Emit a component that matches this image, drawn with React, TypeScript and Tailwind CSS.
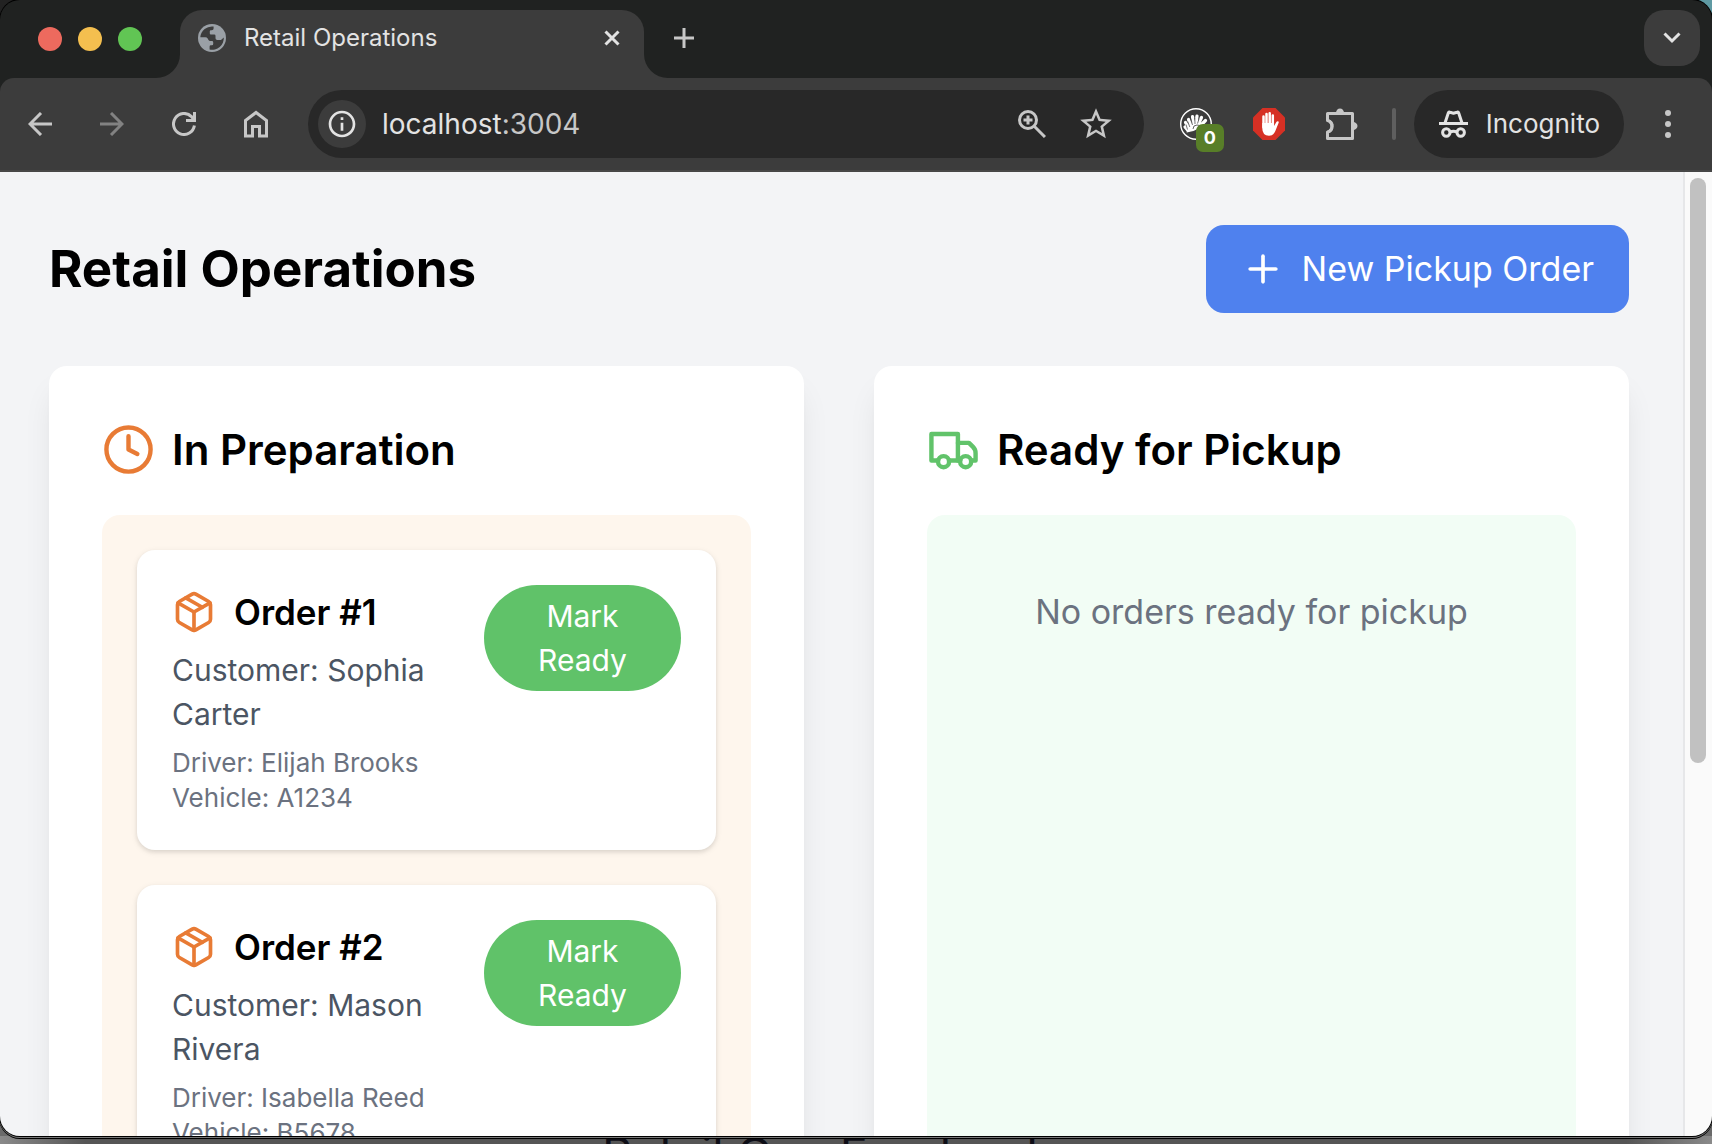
import React from "react";
import { Clock, Package, Plus } from "lucide-react";
import { MdInfoOutline, MdStarOutline } from "react-icons/md";

type Order = { id: number; customer: string; driver: string; vehicle: string };

const preparing: Order[] = [
  { id: 1, customer: "Sophia Carter", driver: "Elijah Brooks", vehicle: "A1234" },
  { id: 2, customer: "Mason Rivera", driver: "Isabella Reed", vehicle: "B5678" },
];

function IconButton({ label, children, className = "" }: { label: string; children: React.ReactNode; className?: string }) {
  return (
    <button type="button" aria-label={label} className={`flex size-10 shrink-0 items-center justify-center text-[#c7c7c7] ${className}`}>
      {children}
    </button>
  );
}

/* Browser icons, stroked with the current text colour. */

function Glyph({ width, height, children, strokeWidth = 3 }: { width: number; height: number; children: React.ReactNode; strokeWidth?: number }) {
  return (
    <svg width={width} height={height} viewBox={`0 0 ${width} ${height}`} fill="none" stroke="currentColor" strokeWidth={strokeWidth} aria-hidden="true">
      {children}
    </svg>
  );
}

function GlobeIcon() {
  return (
    <svg width="28" height="28" viewBox="0 0 28 28" aria-hidden="true">
      <circle cx="14" cy="14" r="14" fill="#9aa0a6" />
      <path
        d="M2.300 13.300A11.800 11.800 0 0 1 15.600 2.500V4.500q0 1.800-1.800 1.800h-1q-1 0-1 1v2.200q0 1 1 1h3.400q1.300 0 1.300 1.300v2.400q0 1.800 1.800 1.800h3.700l2.800-2.600A11.800 11.800 0 0 1 11.600 25.600V22.500q0-1.300 1.300-1.300h1q1.300 0 1.300-1.300v-1.600q0-1.300-1.300-1.300h-1.500q-1.500 0-2.200-1.500l-.7-1.200q-.6-1-2-1Z"
        fill="#3c3c3c"
      />
    </svg>
  );
}

const BackIcon = () => (
  <Glyph width={24} height={24}>
    <path d="M24 12H2.500M13 1 2 12l11 11" />
  </Glyph>
);

const ForwardIcon = () => (
  <Glyph width={24} height={24}>
    <path d="M0 12h21.500M11 1l11 11-11 11" />
  </Glyph>
);

const ReloadIcon = () => (
  <Glyph width={24} height={24}>
    <path d="M22.400 13.500A10.500 10.500 0 1 1 19.500 4.600L22.500 8.500M22.500 0v8.500H14" />
  </Glyph>
);

const HomeIcon = () => (
  <Glyph width={24} height={28}>
    <path d="M1.500 10.500 12 2.500l10.500 8V26H15.500V16.500h-7V26h-7Z" />
  </Glyph>
);

const ZoomIcon = () => (
  <Glyph width={28} height={28}>
    <circle cx="10" cy="10" r="8.500" />
    <path d="m16 16 11 11M10 5.500v9M5.500 10h9" />
  </Glyph>
);

const CloseIcon = () => (
  <Glyph width={16} height={16}>
    <path d="m1.500 1.500 13 13M14.500 1.500l-13 13" />
  </Glyph>
);

const NewTabIcon = () => (
  <Glyph width={20} height={20}>
    <path d="M10 0v20M0 10h20" />
  </Glyph>
);

const ChevronIcon = () => (
  <Glyph width={18} height={12}>
    <path d="m1.500 1.500 7.500 7.500 7.500-7.500" />
  </Glyph>
);

const PuzzleIcon = () => (
  <Glyph width={32} height={32}>
    <path d="M1.500 12.500V5.500H26.500V30.500H1.500V24C7.500 22.500 7.500 14 1.500 12.500Z" strokeLinejoin="round" />
    <path d="M10 5a4 4.500 0 0 1 8 0ZM27 14a4.500 4 0 0 1 0 8Z" fill="currentColor" stroke="none" />
    <path d="M0 14v8.500" stroke="#3c3c3c" strokeWidth={5} />
    <path d="M1.500 12.500C7.500 14 7.500 22.500 1.500 24" />
  </Glyph>
);

const IncognitoIcon = () => (
  <Glyph width={29} height={28}>
    <path d="M6 13 9.300 3q.4-1.200 1.600-.8l3.600 1 3.600-1q1.200-.4 1.600.8L23 13" strokeLinejoin="round" />
    <path d="M0 13.500h29" />
    <circle cx="7.300" cy="22.500" r="3.700" />
    <circle cx="21.700" cy="22.500" r="3.700" />
    <path d="M11 22q3.500-1.500 7 0" />
  </Glyph>
);

function FanIcon() {
  return (
    <svg width="32" height="32" viewBox="0 0 32 32" fill="none" aria-hidden="true">
      <circle cx="16" cy="16" r="15.300" stroke="#fff" strokeWidth="1.400" />
      <g stroke="#fff" strokeWidth="3.200" strokeLinecap="round">
        <path d="M8 22.500 5 19M9 20.500 5.500 14.500M11 18.500 8.500 11.500M13.500 16.500 12.500 8.500M16 16l1-8M18.500 16l3-6.500M21 17l4.500-4.500" />
      </g>
      <path d="M6.500 24.500q1-7.500 9-8.500 4 0 6 3l-8 4Z" fill="#fff" />
      <path d="M7.500 21.500 6 16.500M9.800 19 7.800 13.500M12.500 17 10.800 10.500M15 16l-.2-6M17.500 15.500l1.700-5" stroke="#3c3c3c" strokeWidth="0.700" />
      <path d="M13 21q0-4 4-4 3 0 4.500 2" stroke="#3c3c3c" strokeWidth="0.800" />
    </svg>
  );
}

function StopHandIcon() {
  return (
    <svg width="32" height="32" viewBox="0 0 32 32" aria-hidden="true">
      <path d="M9.500 0h13L32 9.500v13L22.500 32h-13L0 22.500v-13Z" fill="#d63024" />
      <g stroke="#fff" strokeWidth="2.500" strokeLinecap="round">
        <path d="M10.500 8.500V19M13.500 6v12M16.700 5.300V18M19.800 7.500V19" />
      </g>
      <path d="M9.250 15h11.800v3l2.200-3.800q.8-1.300 2.200-.7.500.3.200 1.200l-3.300 8.300Q20.500 27.700 16 27.700q-6.750 0-6.750-7.700Z" fill="#fff" />
    </svg>
  );
}

function TruckIcon() {
  return (
    <svg viewBox="0 0 24 24" fill="none" stroke="currentColor" strokeWidth="2" strokeLinecap="round" strokeLinejoin="round" className="size-[53px] text-[#61c36a]" aria-hidden="true">
      <path d="M10 17h4V5H2v12h3" />
      <path d="M20 17h2v-3.340a4 4 0 0 0-1.170-2.830L19 9h-5" />
      <path d="M14 17h1" />
      <circle cx="7.500" cy="17.500" r="2.500" />
      <circle cx="17.500" cy="17.500" r="2.500" />
    </svg>
  );
}

function TabStrip() {
  return (
    <div className="flex h-[78px] shrink-0 items-start pt-[10px] pr-3">
      <div className="flex h-[58px] w-[180px] items-center gap-4 pl-[38px]">
        <button type="button" aria-label="Close window" className="size-6 rounded-full bg-[#ed6a5e]" />
        <button type="button" aria-label="Minimize window" className="size-6 rounded-full bg-[#f4bf4f]" />
        <button type="button" aria-label="Zoom window" className="size-6 rounded-full bg-[#61c554]" />
      </div>
      <div className="relative flex h-[68px] w-[464px] items-center rounded-t-[22px] bg-[#3c3c3c] pr-[18px] pb-3 pl-[18px]">
        <svg className="absolute bottom-0 -left-6" width="24" height="24" viewBox="0 0 24 24" aria-hidden="true">
          <path d="M24 0v24H0A24 24 0 0 0 24 0Z" fill="#3c3c3c" />
        </svg>
        <svg className="absolute -right-6 bottom-0" width="24" height="24" viewBox="0 0 24 24" aria-hidden="true">
          <path d="M0 0v24h24A24 24 0 0 1 0 0Z" fill="#3c3c3c" />
        </svg>
        <GlobeIcon />
        <span className="ml-[18px] text-[24px] leading-[32px] text-[#e3e3e3]">Retail Operations</span>
        <button type="button" aria-label="Close tab" className="ml-auto flex size-7 items-center justify-center text-[#e3e3e3]">
          <CloseIcon />
        </button>
      </div>
      <IconButton label="New tab" className="mt-2 ml-5">
        <NewTabIcon />
      </IconButton>
      <button type="button" aria-label="Search tabs" className="ml-auto flex size-14 items-center justify-center rounded-[20px] bg-[#3c3c3c] text-[#e3e3e3]">
        <ChevronIcon />
      </button>
    </div>
  );
}

function Toolbar() {
  return (
    <div className="flex h-[94px] shrink-0 items-center rounded-t-[14px] border-b-2 border-[#474747] bg-[#3c3c3c] pr-6 pl-5">
      <div className="flex gap-8">
        <IconButton label="Back"><BackIcon /></IconButton>
        <IconButton label="Forward" className="opacity-50"><ForwardIcon /></IconButton>
        <IconButton label="Reload"><ReloadIcon /></IconButton>
        <IconButton label="Home"><HomeIcon /></IconButton>
      </div>
      <div className="ml-8 flex h-[68px] min-w-0 flex-1 items-center rounded-full bg-[#282828] pr-7 pl-[10px]">
        <button type="button" aria-label="View site information" className="flex size-12 shrink-0 items-center justify-center rounded-full bg-[#3c3c3c] text-[#e3e3e3]">
          <MdInfoOutline className="size-8" />
        </button>
        <span className="ml-4 text-[28px] leading-[36px] text-[#e3e3e3]">
          localhost<span className="text-[#c7c7c7]">:3004</span>
        </span>
        <div className="ml-auto flex gap-6">
          <IconButton label="Zoom"><ZoomIcon /></IconButton>
          <IconButton label="Bookmark this tab"><MdStarOutline className="size-[38px]" /></IconButton>
        </div>
      </div>
      <div className="ml-8 flex items-center gap-[33px]">
        <IconButton label="Extension, 0 items" className="relative">
          <FanIcon />
          <span className="absolute top-5 left-5 flex size-7 items-center justify-center rounded-[7px] bg-[#587e28] text-[18px] leading-none font-bold text-white">0</span>
        </IconButton>
        <IconButton label="Ad blocker"><StopHandIcon /></IconButton>
        <IconButton label="Extensions"><PuzzleIcon /></IconButton>
      </div>
      <div className="ml-[30px] h-8 w-1 rounded-full bg-[#5f5f5f]" />
      <button type="button" className="ml-[18px] flex h-[68px] items-center gap-[18px] rounded-full bg-[#282828] pr-6 pl-[25px] text-[26px] leading-[36px] text-[#e3e3e3]">
        <IncognitoIcon />
        Incognito
      </button>
      <IconButton label="Browser menu" className="ml-6">
        <svg width="6" height="28" viewBox="0 0 6 28" fill="currentColor" aria-hidden="true">
          <circle cx="3" cy="3" r="3" />
          <circle cx="3" cy="14" r="3" />
          <circle cx="3" cy="25" r="3" />
        </svg>
      </IconButton>
    </div>
  );
}

function OrderCard({ order }: { order: Order }) {
  return (
    <article className="flex items-start justify-between rounded-[18px] bg-white p-[35px] shadow-[0_2px_6px_rgba(0,0,0,0.1),0_2px_4px_rgba(0,0,0,0.06)]">
      <div className="min-w-0 flex-1">
        <h3 className="flex items-center gap-[18px] text-[35px] leading-[54px] font-semibold">
          <Package className="size-[44px] text-[#e87b35]" />
          {`Order #${order.id}`}
        </h3>
        <p className="mt-[9px] text-[30px] leading-[44px] text-[#4b5563]">{`Customer: ${order.customer}`}</p>
        <p className="mt-[9px] text-[26px] leading-[35px] text-[#6b7280]">{`Driver: ${order.driver}`}</p>
        <p className="text-[26px] leading-[35px] text-[#6b7280]">{`Vehicle: ${order.vehicle}`}</p>
      </div>
      <button type="button" className="w-[197px] shrink-0 rounded-full bg-[#60c269] px-[35px] py-[9px] text-[30px] leading-[44px] text-white">
        Mark Ready
      </button>
    </article>
  );
}

function Column({ title, icon, children }: { title: string; icon: React.ReactNode; children: React.ReactNode }) {
  return (
    <section className="flex flex-col rounded-[18px] bg-white p-[53px] shadow-[0_22px_33px_-7px_rgba(0,0,0,0.1),0_9px_13px_-9px_rgba(0,0,0,0.1)]">
      <h2 className="mb-[35px] flex items-center gap-[17px] text-[42px] leading-[61px] font-semibold">
        {icon}
        {title}
      </h2>
      {children}
    </section>
  );
}

export default function App() {
  return (
    <div className="flex h-screen flex-col overflow-hidden bg-[linear-gradient(to_bottom,transparent_50%,#6a6a6a_50%),linear-gradient(to_right,#222_50%,#5f9aa3_50%)] font-['Inter',sans-serif] text-black">
      <div className="relative flex min-h-0 flex-1 flex-col overflow-hidden rounded-[20px] bg-[#202221] shadow-[0_0_0_1px_#000,0_1px_0_1px_#777,0_2px_0_1px_#000]">
        <TabStrip />
        <Toolbar />
        <div className="flex min-h-0 flex-1">
          <main className="flex-1 overflow-hidden bg-[#f3f4f6] pt-[53px] pr-[54px] pl-[49px]">
            <header className="mb-[53px] flex items-center justify-between">
              <h1 className="text-[51px] leading-[70px] font-bold">Retail Operations</h1>
              <button type="button" className="flex items-center gap-[17px] rounded-[18px] bg-[#4f81ee] px-[35px] py-[18px] text-[34px] leading-[52px] text-white">
                <Plus className="size-[44px]" />
                New Pickup Order
              </button>
            </header>
            <div className="grid grid-cols-2 gap-[70px]">
              <Column title="In Preparation" icon={<Clock className="size-[53px] text-[#e87b35]" />}>
                <div className="flex flex-col gap-[35px] rounded-[18px] bg-[#fef6ed] p-[35px]">
                  {preparing.map((order) => <OrderCard key={order.id} order={order} />)}
                </div>
              </Column>
              <Column title="Ready for Pickup" icon={<TruckIcon />}>
                <div className="flex-1 rounded-[18px] bg-[#f2fdf5] p-[35px]">
                  <p className="py-[35px] text-center text-[34px] leading-[54px] text-[#6b7280]">No orders ready for pickup</p>
                </div>
              </Column>
            </div>
          </main>
          <div className="w-[29px] shrink-0 border-l-2 border-[#e6e7e9] bg-[#fafafa] pt-[6px] pl-[5px]">
            <div className="h-[585px] w-4 rounded-full bg-[#c1c1c1]" />
          </div>
        </div>
      </div>
      <div className="h-2 shrink-0 overflow-hidden bg-[linear-gradient(to_right,#8a8a8a,#555_5%,#555_95%,#8a8a8a)] pl-[602px]">
        <p className="text-[47px] leading-[36px] text-[#0d0d16]">Retail Ops Frontend</p>
      </div>
    </div>
  );
}
